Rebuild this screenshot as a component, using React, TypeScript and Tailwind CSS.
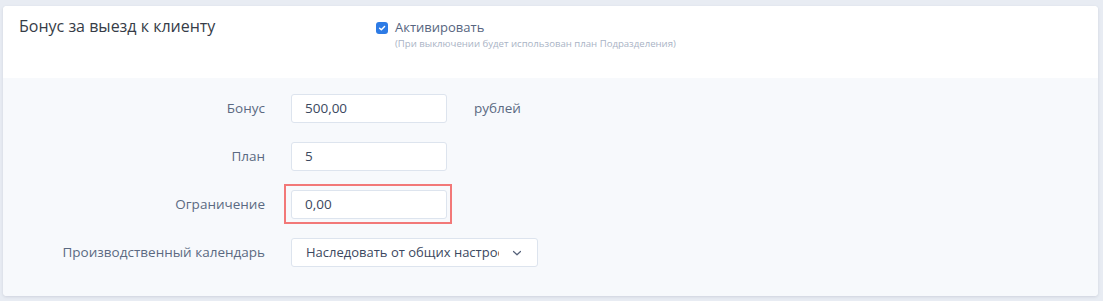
import React from "react";

const font = { fontFamily: '"Open Sans", "Noto Sans", sans-serif' };

function Row({ label, children }: { label: string; children: React.ReactNode }) {
  return (
    <div className="flex items-center">
      <div className="w-[262px] whitespace-nowrap text-right text-[13.5px] text-[#5b6a82]">{label}</div>
      <div className="ml-[26px] flex items-center">{children}</div>
    </div>
  );
}

function Input({ value }: { value: string }) {
  return (
    <div className="flex h-[29px] w-[156px] items-center rounded-[3px] border border-[#dde4ee] bg-white pl-[13px] text-[13.5px] text-[#3b4860]">
      {value}
    </div>
  );
}

export default function App() {
  return (
    <div className="h-[301px] w-[1103px] bg-[#e8ecf3] pt-[6px] pl-[3px] pr-[5px]" style={font}>
      <div className="h-[290px] overflow-hidden rounded-[4px] bg-white shadow-[0_1px_3px_rgba(60,70,100,0.15)]">
        <div className="flex h-[72px] bg-white">
          <div className="w-[373px] pl-[16px] pt-[8px] text-[16px] text-[#363c47]">Бонус за выезд к клиенту</div>
          <div className="pt-[12px]">
            <div className="flex items-center">
              <div className="flex h-[12px] w-[12px] items-center justify-center rounded-[3px] bg-[#2d7be5]">
                <svg width="8" height="8" viewBox="0 0 10 10">
                  <path d="M2 5.2 L4.2 7.3 L8.2 3" fill="none" stroke="white" strokeWidth="1.8" strokeLinecap="round" strokeLinejoin="round" />
                </svg>
              </div>
              <span className="ml-[7px] text-[13px] text-[#566580]">Активировать</span>
            </div>
            <div className="-mt-[1px] pl-[19px] text-[9.6px] text-[#a9b3c5]">(При выключении будет использован план Подразделения)</div>
          </div>
        </div>
        <div className="flex h-[218px] flex-col gap-[19px] bg-[#f7f9fc] pt-[16px]">
          <Row label="Бонус">
            <Input value="500,00" />
            <span className="ml-[27px] text-[13.5px] text-[#5b6a82]">рублей</span>
          </Row>
          <Row label="План">
            <Input value="5" />
          </Row>
          <Row label="Ограничение">
            <div className="relative">
              <Input value="0,00" />
              <span className="pointer-events-none absolute -top-[6px] -bottom-[5px] -left-[7px] -right-[5px] border-2 border-[#f27878]" />
            </div>
          </Row>
          <Row label="Производственный календарь">
            <div className="flex h-[29px] w-[247px] items-center rounded-[3px] border border-[#dde4ee] bg-white pl-[14px] pr-[15px] text-[13px] text-[#3b4860]">
              <span className="w-[193px] shrink-0 overflow-hidden whitespace-nowrap">Наследовать от общих настроек</span>
              <svg className="ml-auto" width="10" height="10" viewBox="0 0 10 10">
                <path d="M1.5 3.5 L5 6.8 L8.5 3.5" fill="none" stroke="#56627a" strokeWidth="1.2" strokeLinecap="round" strokeLinejoin="round" />
              </svg>
            </div>
          </Row>
        </div>
      </div>
    </div>
  );
}
